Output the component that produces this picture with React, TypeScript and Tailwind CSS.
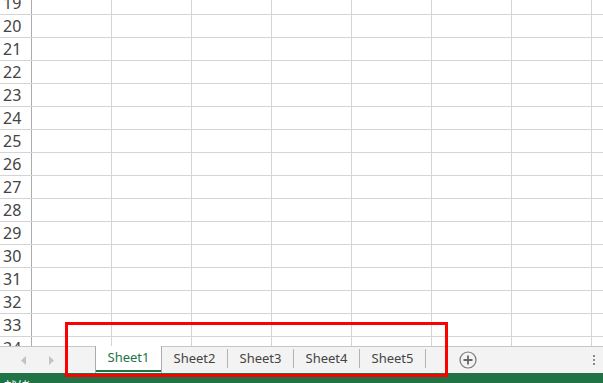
import React from 'react';

const rows = Array.from({ length: 16 }, (_, i) => 19 + i);
const cols = Array.from({ length: 8 }, (_, i) => i);
const sheets = ['Sheet1', 'Sheet2', 'Sheet3', 'Sheet4', 'Sheet5'];

export default function App() {
  return (
    <div className="relative w-[603px] h-[383px] overflow-hidden bg-white flex flex-col font-['Noto_Sans','Liberation_Sans',sans-serif]">
      {/* Grid */}
      <div className="h-[346px] overflow-hidden shrink-0">
        <div className="-mt-[8px]">
          {rows.map((r) => (
            <div key={r} className="flex h-[23px] border-b border-[#d4d4d4]">
              <div className="w-[32px] shrink-0 border-r border-[#ababab] pl-[3px] text-[16px] leading-[22px] text-[#444]">
                {r}
              </div>
              {cols.map((c) => (
                <div key={c} className="w-[80px] shrink-0 border-r border-[#d4d4d4]" />
              ))}
            </div>
          ))}
        </div>
      </div>

      {/* Sheet tab bar */}
      <div className="h-[27px] shrink-0 border-t border-[#c6c6c6] bg-[#f3f3f3] flex items-stretch">
        <div className="w-[95px] shrink-0 flex items-center">
          <svg width="6" height="9" viewBox="0 0 6 9" className="ml-[21px]">
            <path d="M5 0 L0 4.5 L5 9 Z" fill="#c3c3c3" />
          </svg>
          <svg width="6" height="9" viewBox="0 0 6 9" className="ml-[22px]">
            <path d="M0 0 L5 4.5 L0 9 Z" fill="#c3c3c3" />
          </svg>
        </div>
        <div className="flex items-stretch">
          {sheets.map((s, i) =>
            i === 0 ? (
              <div
                key={s}
                className="relative w-[67px] -mt-px bg-white border-x border-[#ababab] flex items-center justify-center text-[13px] text-[#217346]"
              >
                <span className="-mt-[3px]">{s}</span>
                <div className="absolute left-0 right-0 bottom-[1px] h-[2px] bg-[#217346]" />
              </div>
            ) : (
              <div key={s} className="w-[66px] flex items-center">
                <span className="flex-1 text-center text-[13px] text-[#444] -mt-[3px]">{s}</span>
                <div className="w-px h-[19px] bg-[#b4b4b4] -mt-[3px]" />
              </div>
            )
          )}
        </div>
        <div className="ml-[33px] flex items-center -mt-[1px]">
          <svg width="18" height="18" viewBox="0 0 18 18">
            <circle cx="9" cy="9" r="8" fill="none" stroke="#777" strokeWidth="1.2" />
            <path d="M9 4.5 V13.5 M4.5 9 H13.5" stroke="#666" strokeWidth="1.8" />
          </svg>
        </div>
        <div className="ml-auto mr-[8px] flex flex-col items-center justify-center gap-[2px] -mt-[1px]">
          <div className="w-[2px] h-[2px] bg-[#8a8a8a]" />
          <div className="w-[2px] h-[2px] bg-[#8a8a8a]" />
          <div className="w-[2px] h-[2px] bg-[#8a8a8a]" />
        </div>
      </div>

      {/* Status bar */}
      <div className="flex-1 bg-[#217346] overflow-hidden">
        <div className="pl-[4px] pt-[5px] text-[13px] leading-[16px] text-white font-['Noto_Sans_CJK_SC',sans-serif]">
          就绪
        </div>
      </div>

      {/* Annotation */}
      <div className="absolute left-[65px] top-[322px] w-[383px] h-[55px] border-[3px] border-[#ff0000] pointer-events-none" />
    </div>
  );
}
